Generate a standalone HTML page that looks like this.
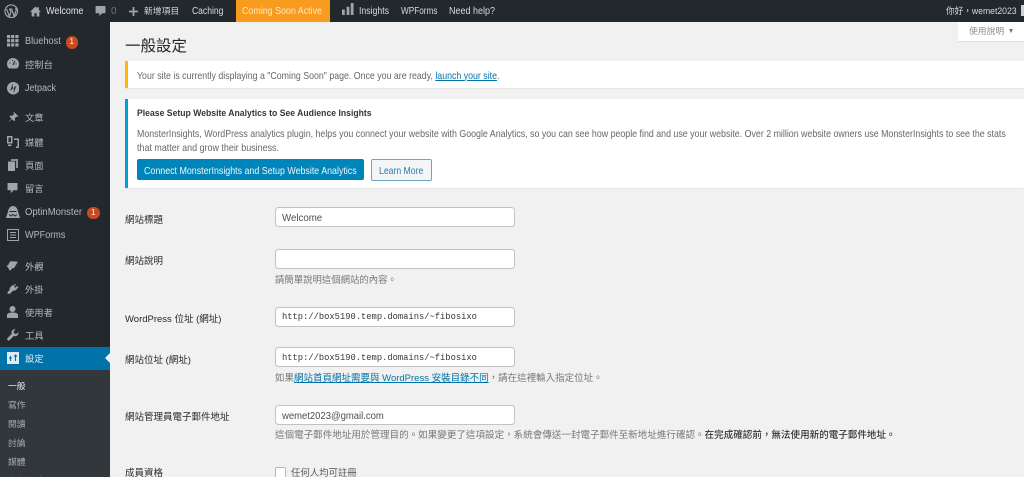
<!DOCTYPE html>
<html lang="zh-TW"><head><meta charset="utf-8"><title>一般設定</title>
<style>
html,body{margin:0;padding:0;width:1024px;height:477px;overflow:hidden;background:#f1f1f1}
body{position:relative;font-family:"Liberation Sans","Noto Sans CJK TC",sans-serif;font-size:10px;color:#444}
.a,.t{position:absolute}
.t{white-space:nowrap;line-height:14px;height:14px;filter:blur(.3px);transform-origin:0 0}
.w{color:#d8dadb}.g{color:#a9adb1}.s{color:#b4b9be}.l{color:#23282d;font-size:9.5px}.d{color:#777;font-size:9.5px}
.inp{position:absolute;left:275px;width:238px;height:18px;background:#fff;border:1px solid #bfc3c7;border-radius:3.5px}
.m{font-family:"Liberation Mono","Noto Sans CJK TC",monospace;font-size:9.5px;color:#32373c;transform:scaleX(.924)}
svg{position:absolute;filter:blur(.25px)}
.badge{position:absolute;width:12.500px;height:12.500px;border-radius:50%;background:#ca4a1f;color:#fff;font-size:8px;line-height:12.500px;text-align:center}
a{color:#0073aa;text-decoration:underline}
</style></head><body>
<div class="a" style="left:0;top:0;width:1024px;height:21.5px;background:#23282d"></div>
<div class="a" style="left:0;top:21px;width:109.5px;height:456px;background:#23282d"></div>
<div class="a" style="left:0;top:370px;width:109.5px;height:107px;background:#32373c"></div>
<div class="a" style="left:0;top:347px;width:109.5px;height:23px;background:#0073aa"></div>
<div class="a" style="left:104.5px;top:353px;width:0;height:0;border:5.5px solid transparent;border-right-color:#f1f1f1;border-left:0"></div>

<!-- admin bar -->
<svg style="left:4px;top:4px" width="14.500" height="14.500" viewBox="0 0 20 20"><circle cx="10" cy="10" r="8.7" fill="none" stroke="#a0a5aa" stroke-width="1.6"/><path d="M3.6 7 7.4 17.2 9.5 11 8 7h1.2M7 7h4.5M10.5 7l3.6 10 2.6-8c.4-1.4-.3-2.6-1.3-3" fill="none" stroke="#a0a5aa" stroke-width="1.7"/></svg>
<svg style="left:30px;top:6px" width="11" height="11" viewBox="0 0 20 20"><path d="M10 1 0 10.5h3V19h5v-6h4v6h5v-8.500h3L16 7V2h-3v2z" fill="#a0a5aa"/></svg>
<div class="t" style="left:46px;top:5px;color:#e4e5e6;transform:scaleX(.9)">Welcome</div>
<svg style="left:94.500px;top:5px" width="11" height="12" viewBox="0 0 20 20"><path d="M2 1h16a1 1 0 0 1 1 1v11a1 1 0 0 1-1 1h-5l-5 5v-5H2a1 1 0 0 1-1-1V2a1 1 0 0 1 1-1z" fill="#a0a5aa"/></svg>
<div class="t" style="left:111px;top:5px;color:#6f7478">0</div>
<svg style="left:129px;top:6.500px" width="9" height="9" viewBox="0 0 10 10"><path d="M4 0h2v4h4v2H6v4H4V6H0V4h4z" fill="#a0a5aa"/></svg>
<div class="t w" style="left:144px;top:4px;font-size:8.800px">新增項目</div>
<div class="t w" style="left:192px;top:5px;transform:scaleX(.855)">Caching</div>
<div class="a" style="left:236px;top:0;width:93.500px;height:21.500px;background:#f89c1f"></div>
<div class="t" style="left:242px;top:5px;color:#fbe8c8;transform:scaleX(.888)">Coming Soon Active</div>
<svg style="left:342px;top:3px" width="12" height="12" viewBox="0 0 13 13"><path d="M0 7h3v6H0zM5 4h3v9H5zM9.500 0h3v13h-3z" fill="#a0a5aa"/></svg>
<div class="t w" style="left:359px;top:5px;transform:scaleX(.87)">Insights</div>
<div class="t w" style="left:401px;top:5px;transform:scaleX(.82)">WPForms</div>
<div class="t w" style="left:449px;top:5px;transform:scaleX(.9)">Need help?</div>
<div class="t w" style="left:946px;top:4px;font-size:9px;transform:scaleX(.96)">你好，wemet2023</div>
<div class="a" style="left:1021px;top:5px;width:3px;height:11px;background:#d0d0d0"></div>

<!-- help tab -->
<div class="a" style="left:957.500px;top:21.500px;width:67px;height:19.500px;background:#fff;box-shadow:0 1px 1px rgba(0,0,0,.08)"></div>
<div class="t" style="left:969px;top:24px;color:#8a8d90;font-size:8.800px">使用說明</div>
<div class="a" style="left:1009px;top:29px;width:0;height:0;border:2.500px solid transparent;border-top:4px solid #72777c;border-bottom:0"></div>

<!-- sidebar -->
<svg style="left:7px;top:35px" width="11.500" height="11.500" viewBox="0 0 12 12"><path d="M0 0h3.300v3.300H0zM4.300 0h3.300v3.300H4.300zM8.700 0H12v3.300H8.700zM0 4.300h3.300v3.300H0zM4.300 4.300h3.300v3.300H4.300zM8.700 4.300H12v3.300H8.700zM0 8.700h3.300V12H0zM4.300 8.700h3.300V12H4.300zM8.700 8.700H12V12H8.700z" fill="#a0a5aa"/></svg>
<div class="t s" style="left:25px;top:35px;transform:scaleX(.92)">Bluehost</div>
<div class="badge" style="left:65.500px;top:36px">1</div>
<svg style="left:7px;top:58px" width="12" height="11" viewBox="0 0 12 11"><path d="M6 0a6 6 0 0 1 6 6c0 2-.8 3.500-2 4.500H2C.8 9.500 0 8 0 6a6 6 0 0 1 6-6z" fill="#a0a5aa"/><path d="M6 7 8 3M2.500 5h1M8.500 6h1M5 2.500h1" stroke="#23282d" stroke-width="1.100"/></svg>
<div class="t s" style="left:25px;top:58px;font-size:9.300px">控制台</div>
<svg style="left:6.500px;top:82px" width="12.500" height="12.500" viewBox="0 0 12 12"><circle cx="6" cy="6" r="6" fill="#a0a5aa"/><path d="M5.500 1.500v5L3 8.500zM6.500 10.500v-5L9 3.500z" fill="#23282d"/></svg>
<div class="t s" style="left:25px;top:82px;transform:scaleX(.9)">Jetpack</div>

<svg style="left:7px;top:111px" width="12" height="12" viewBox="0 0 20 20"><path d="M11 1l8 8-2 1-1-1-3 3 .5 3.500L12 17l-3.500-3.500L2 19l5.500-6.500L4 9l1.500-1.500L9 8l3-3-1-1z" fill="#a0a5aa"/></svg>
<div class="t s" style="left:25px;top:111px;font-size:9.300px">文章</div>
<svg style="left:6px;top:136px" width="13" height="12" viewBox="0 0 13 12"><path d="M1 0h5.500v7.500H1zM2.500 1.500V6H5V1.500z" fill="#a0a5aa" fill-rule="evenodd"/><path d="M8 2.500h5V11a1 1 0 0 1-1 1h-2V10.500h1.500V4H8zM2 8.500h3.500V10H2z" fill="#a0a5aa"/></svg>
<div class="t s" style="left:25px;top:135.500px;font-size:9.300px">媒體</div>
<svg style="left:7.500px;top:159px" width="10" height="12" viewBox="0 0 10 12"><path d="M3 0h7v9H8V2H3z" fill="#8c9094"/><path d="M0 2.500h7V12H0z" fill="#a0a5aa"/></svg>
<div class="t s" style="left:25px;top:158.500px;font-size:9.300px">頁面</div>
<svg style="left:7px;top:182px" width="11" height="12" viewBox="0 0 20 20"><path d="M1 1h18v13h-7l-5 5.500V14H1z" fill="#a0a5aa"/></svg>
<div class="t s" style="left:25px;top:181.500px;font-size:9.300px">留言</div>
<svg style="left:5.500px;top:206px" width="14" height="12" viewBox="0 0 14 12"><path d="M7 0c3 0 4.500 2.500 5 5.500l2 6.500H0l2-6.500C2.500 2.500 4 0 7 0z" fill="#a0a5aa"/><path d="M3.500 5.500h7M3 8.500l2 1.500 2-1.500 2 1.500 2-1.500" stroke="#23282d" fill="none" stroke-width="1"/></svg>
<div class="t s" style="left:25px;top:205.500px;transform:scaleX(.95)">OptinMonster</div>
<div class="badge" style="left:87px;top:206.500px">1</div>
<svg style="left:6.500px;top:229px" width="12" height="12" viewBox="0 0 12 12"><path d="M.5.500h11v11H.5zM3 3.500h6M3 6h6M3 8.500h6" fill="none" stroke="#a0a5aa"/></svg>
<div class="t s" style="left:25px;top:229px;transform:scaleX(.91)">WPForms</div>

<svg style="left:6px;top:260px" width="13" height="12" viewBox="0 0 20 20"><path d="M19 3 8 2C6 2 4.500 4 4 6c-.5 2-2 3-4 3.500C2 12 4 14 5.500 18c2-1 3.500-3 4-4.500 1.500.5 3 0 4-1.500z" fill="#a0a5aa"/></svg>
<div class="t s" style="left:25px;top:259.500px;font-size:9.300px">外觀</div>
<svg style="left:6.500px;top:283px" width="12" height="12" viewBox="0 0 20 20"><path d="M13 1l2 2-3 3 2 2 3-3 2 2-3.500 4c-1.500 1.500-3.500 2-5 1.500L5 18H1v-3l3.500-3.500C4 10 4.500 8 6 6.500L10 3l2 2z" fill="#a0a5aa"/></svg>
<div class="t s" style="left:25px;top:283px;font-size:9.300px">外掛</div>
<svg style="left:7px;top:306px" width="11" height="12" viewBox="0 0 11 12"><circle cx="5.500" cy="3" r="3" fill="#a0a5aa"/><path d="M0 12V9c0-1.500 2-2.500 5.500-2.500S11 7.500 11 9v3z" fill="#a0a5aa"/></svg>
<div class="t s" style="left:25px;top:305.500px;font-size:9.300px">使用者</div>
<svg style="left:7px;top:329px" width="12" height="12" viewBox="0 0 20 20"><path d="M19 5l-3.500 3.500L12 7.500 11 4l3.500-3.500C11 0 7.500 2 7.500 5.500c0 1 .2 1.800.5 2.500L1 15c-1 1-1 2.500 0 3.500s2.500 1 3.500 0l7-7c.7.300 1.500.500 2.500.500 3.500 0 5.500-3.500 5-7z" fill="#a0a5aa"/></svg>
<div class="t s" style="left:25px;top:329px;font-size:9.300px">工具</div>
<svg style="left:7px;top:352px" width="12" height="12" viewBox="0 0 12 12"><path d="M0 0h12v12H0z" fill="#dfeaf1"/><path d="M3.500 4v5M2 6h3M8.500 3v6M7 4.500 8.500 3 10 4.500" stroke="#0073aa" stroke-width="1.100" fill="none"/></svg>
<div class="t" style="left:25px;top:352px;color:#e6f0f5;font-size:9.300px">設定</div>

<div class="t" style="left:8px;top:378.500px;color:#e8e8e8;font-size:8.800px">一般</div>
<div class="t g" style="left:8px;top:397.500px;font-size:8.800px">寫作</div>
<div class="t g" style="left:8px;top:416.500px;font-size:8.800px">閱讀</div>
<div class="t g" style="left:8px;top:435.500px;font-size:8.800px">討論</div>
<div class="t g" style="left:8px;top:454.500px;font-size:8.800px">媒體</div>
<div class="t g" style="left:8px;top:473.500px;font-size:8.800px">永久連結</div>

<!-- content -->
<div class="t" style="left:125px;top:36.500px;height:20px;line-height:20px;font-size:15.500px;color:#23282d">一般設定</div>

<div class="a" style="left:125px;top:61px;width:899px;height:27px;background:#fff;box-shadow:0 1px 1px rgba(0,0,0,.05)"></div>
<div class="a" style="left:125px;top:61px;width:3px;height:27px;background:#ffb900"></div>
<div class="t" style="left:137px;top:69.500px;font-size:10.100px;color:#666;transform:scaleX(.872)">Your site is currently displaying a "Coming Soon" page. Once you are ready, <a>launch your site</a>.</div>

<div class="a" style="left:125px;top:98.500px;width:899px;height:89px;background:#fff;box-shadow:0 1px 1px rgba(0,0,0,.05)"></div>
<div class="a" style="left:125px;top:98.500px;width:3px;height:89px;background:#00a0d2"></div>
<div class="t" style="left:137px;top:107px;font-size:9.500px;font-weight:bold;color:#32373c;transform:scaleX(.91)">Please Setup Website Analytics to See Audience Insights</div>
<div class="t" style="left:137px;top:127.500px;font-size:10.100px;color:#666;transform:scaleX(.875)">MonsterInsights, WordPress analytics plugin, helps you connect your website with Google Analytics, so you can see how people find and use your website. Over 2 million website owners use MonsterInsights to see the stats</div>
<div class="t" style="left:137px;top:141.500px;font-size:10.100px;color:#666;transform:scaleX(.885)">that matter and grow their business.</div>
<div class="a" style="left:137px;top:159.300px;width:227px;height:21px;background:#0085ba;border-radius:2px"></div>
<div class="t" style="left:144px;top:164.500px;font-size:10.200px;color:#eef6fa;transform:scaleX(.87)">Connect MonsterInsights and Setup Website Analytics</div>
<div class="a" style="left:371px;top:159.300px;width:59px;height:19.500px;background:#f3f5f6;border:1px solid #6aa6c2;border-radius:2px"></div>
<div class="t" style="left:379px;top:164.500px;font-size:10.200px;color:#2a7ca3;transform:scaleX(.85)">Learn More</div>

<!-- form -->
<div class="t l" style="left:125px;top:213.500px">網站標題</div>
<div class="inp" style="top:207px"></div>
<div class="t" style="left:282px;top:212px;font-size:10.200px;color:#4a4f54;transform:scaleX(.95)">Welcome</div>

<div class="t l" style="left:125px;top:254.500px">網站說明</div>
<div class="inp" style="top:248.700px"></div>
<div class="t d" style="left:275px;top:273px;font-size:9.400px">請簡單說明這個網站的內容。</div>

<div class="t l" style="left:125px;top:312.500px">WordPress 位址 (網址)</div>
<div class="inp" style="top:306.500px"></div>
<div class="t m" style="left:282px;top:309.500px">http://box5190.temp.domains/~fibosixo</div>

<div class="t l" style="left:125px;top:353.500px">網站位址 (網址)</div>
<div class="inp" style="top:347px"></div>
<div class="t m" style="left:282px;top:350.500px">http://box5190.temp.domains/~fibosixo</div>
<div class="t d" style="left:275px;top:371.500px">如果<a>網站首頁網址需要與 WordPress 安裝目錄不同</a>，請在這裡輸入指定位址。</div>

<div class="t l" style="left:125px;top:410.500px">網站管理員電子郵件地址</div>
<div class="inp" style="top:404.500px"></div>
<div class="t" style="left:282px;top:409.500px;font-size:10.200px;color:#4a4f54;transform:scaleX(.93)">wemet2023@gmail.com</div>
<div class="t d" style="left:275px;top:429px;font-size:9.550px">這個電子郵件地址用於管理目的。如果變更了這項設定，系統會傳送一封電子郵件至新地址進行確認。<span style="color:#32373c;font-weight:500">在完成確認前，無法使用新的電子郵件地址。</span></div>

<div class="t l" style="left:125px;top:466.500px">成員資格</div>
<div class="a" style="left:275px;top:467px;width:9px;height:10px;background:#fff;border:1px solid #b4b9be;border-radius:2px"></div>
<div class="t d" style="left:291px;top:466px;color:#555;font-size:9.400px">任何人均可註冊</div>
</body></html>
